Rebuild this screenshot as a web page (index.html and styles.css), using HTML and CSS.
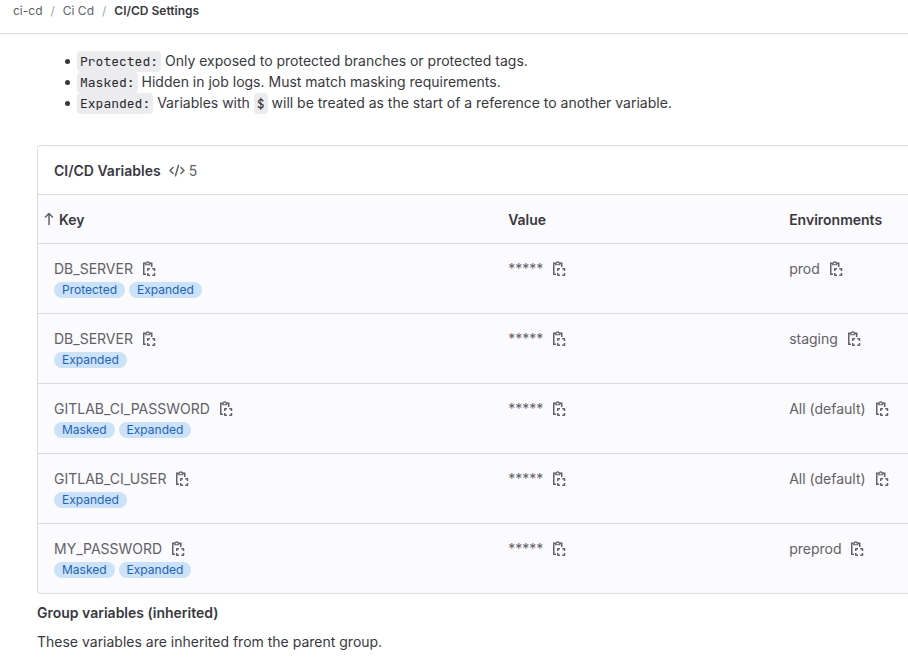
FILE: index.html
```html
<!DOCTYPE html>
<html lang="en">
<head>
<meta charset="utf-8">
<meta name="viewport" content="width=device-width, initial-scale=1">
<title>CI/CD Settings</title>
<link rel="stylesheet" href="styles.css">
</head>
<body>
<svg class="sprite" aria-hidden="true">
  <symbol id="copy" viewBox="0 0 16 16">
    <path d="M4 2.25H2.75v11H5M9 2.25h1.75V6" fill="none" stroke="currentColor" stroke-width="1.5"/>
    <path d="M4.75 3.75V1.8h.8a1.25 1.25 0 0 1 2.4 0h.8v1.95z" fill="none" stroke="currentColor" stroke-width="1.2"/>
    <path d="M6.75 10V7.75H9M11.25 7.75h2.25V10M13.5 12v2.25h-2.25M9 14.25H6.75V12" fill="none" stroke="currentColor" stroke-width="1.5" stroke-linejoin="round"/>
  </symbol>
</svg>
<header class="topbar">
  <nav aria-label="Breadcrumb">
    <ol class="breadcrumb">
      <li><a href="#">ci-cd</a></li>
      <li><a href="#">Ci Cd</a></li>
      <li><a href="#" aria-current="page">CI/CD Settings</a></li>
    </ol>
  </nav>
</header>
<main class="content">
  <ul class="notes">
    <li><code>Protected:</code> Only exposed to protected branches or protected tags.</li>
    <li><code>Masked:</code> Hidden in job logs. Must match masking requirements.</li>
    <li><code>Expanded:</code> Variables with <code>$</code> will be treated as the start of a reference to another variable.</li>
  </ul>
  <section class="card">
    <div class="card-header">
      <h2>CI/CD Variables</h2>
      <span class="count">
        <svg class="code-icon" viewBox="0 0 16 16" aria-hidden="true"><path d="M4 4.5 1 7.5l3 3M12 4.5l3 3-3 3M9.5 2.25l-3 10.5" fill="none" stroke="currentColor" stroke-width="1.5" stroke-linecap="round" stroke-linejoin="round"/></svg>
        5
      </span>
    </div>
    <table>
      <colgroup><col class="col-key"><col class="col-value"><col></colgroup>
      <thead>
        <tr>
          <th class="sorted" scope="col" aria-sort="ascending"><svg class="arrow" viewBox="0 0 10 14" aria-hidden="true"><path d="M5 12.5v-11M1.5 5 5 1.5 8.5 5" fill="none" stroke="currentColor" stroke-width="1.5" stroke-linecap="round" stroke-linejoin="round"/></svg>Key</th>
          <th scope="col">Value</th>
          <th scope="col">Environments</th>
        </tr>
      </thead>
      <tbody>
        <tr>
          <td><div class="cell">DB_SERVER <button type="button" aria-label="Copy key"><svg><use href="#copy"/></svg></button></div><div class="badges"><span>Protected</span><span>Expanded</span></div></td>
          <td><div class="cell">***** <button type="button" aria-label="Copy value"><svg><use href="#copy"/></svg></button></div></td>
          <td><div class="cell">prod <button type="button" aria-label="Copy environment"><svg><use href="#copy"/></svg></button></div></td>
        </tr>
        <tr>
          <td><div class="cell">DB_SERVER <button type="button" aria-label="Copy key"><svg><use href="#copy"/></svg></button></div><div class="badges"><span>Expanded</span></div></td>
          <td><div class="cell">***** <button type="button" aria-label="Copy value"><svg><use href="#copy"/></svg></button></div></td>
          <td><div class="cell">staging <button type="button" aria-label="Copy environment"><svg><use href="#copy"/></svg></button></div></td>
        </tr>
        <tr>
          <td><div class="cell">GITLAB_CI_PASSWORD <button type="button" aria-label="Copy key"><svg><use href="#copy"/></svg></button></div><div class="badges"><span>Masked</span><span>Expanded</span></div></td>
          <td><div class="cell">***** <button type="button" aria-label="Copy value"><svg><use href="#copy"/></svg></button></div></td>
          <td><div class="cell">All (default) <button type="button" aria-label="Copy environment"><svg><use href="#copy"/></svg></button></div></td>
        </tr>
        <tr>
          <td><div class="cell">GITLAB_CI_USER <button type="button" aria-label="Copy key"><svg><use href="#copy"/></svg></button></div><div class="badges"><span>Expanded</span></div></td>
          <td><div class="cell">***** <button type="button" aria-label="Copy value"><svg><use href="#copy"/></svg></button></div></td>
          <td><div class="cell">All (default) <button type="button" aria-label="Copy environment"><svg><use href="#copy"/></svg></button></div></td>
        </tr>
        <tr>
          <td><div class="cell">MY_PASSWORD <button type="button" aria-label="Copy key"><svg><use href="#copy"/></svg></button></div><div class="badges"><span>Masked</span><span>Expanded</span></div></td>
          <td><div class="cell">***** <button type="button" aria-label="Copy value"><svg><use href="#copy"/></svg></button></div></td>
          <td><div class="cell">preprod <button type="button" aria-label="Copy environment"><svg><use href="#copy"/></svg></button></div></td>
        </tr>
      </tbody>
    </table>
  </section>
  <h2 class="group-title">Group variables (inherited)</h2>
  <p>These variables are inherited from the parent group.</p>
</main>
</body>
</html>
```
FILE: styles.css
```css
* { box-sizing: border-box; }
body {
  margin: 0;
  background: #fff;
  color: #3a383f;
  font: 14px/20px Inter, "Liberation Sans", sans-serif;
}
.sprite { display: none; }
h2, p { margin: 0; font-size: 14px; }
h2 { font-weight: 600; }

.topbar {
  padding: 1px 13px 13px;
  border-bottom: 1px solid #dcdcde;
}
.breadcrumb {
  display: flex;
  margin: 0;
  padding: 0;
  list-style: none;
  font-size: 12px;
  line-height: 19px;
}
.breadcrumb li + li::before {
  content: "/";
  margin: 0 8px;
  color: #a4a3a8;
}
.breadcrumb a { color: #626168; text-decoration: none; }
.breadcrumb a[aria-current] { color: #3a383f; font-weight: 600; }

.content { padding: 16px 0 0 37px; }
.notes {
  margin: 0 0 32px;
  padding-left: 28px;
  line-height: 21px;
  list-style: none;
}
.notes li::before {
  content: "";
  display: inline-block;
  width: 5px;
  height: 5px;
  margin-right: 7px;
  border-radius: 50%;
  background: #3a383f;
  vertical-align: 2px;
}
code {
  padding: 2px 3px;
  border-radius: 4px;
  background: #ececef;
  color: #28272d;
  font: 13px/17px "JetBrains Mono", "Liberation Mono", monospace;
}

.card {
  border: 1px solid #dcdcde;
  border-right: 0;
  border-radius: 4px 0 0 4px;
  background: #fbfafd;
  overflow: hidden;
}
.card-header {
  display: flex;
  align-items: center;
  gap: 8px;
  padding: 15px 16px 13px;
  background: #fff;
}
.count { display: flex; align-items: center; gap: 4px; color: #626168; }
.code-icon { width: 16px; height: 16px; }

table { width: 100%; border-collapse: separate; border-spacing: 0; table-layout: fixed; }
.col-key { width: 52.2%; }
.col-value { width: 32.3%; }
th, td {
  padding: 15px 16px 13px;
  border-top: 1px solid #dcdcde;
  text-align: left;
  vertical-align: top;
}
th { font-weight: 600; }
th.sorted { padding-left: 6px; }
.arrow { width: 10px; height: 14px; margin-right: 5px; vertical-align: -1px; color: #626168; }
td { height: 70px; color: #626168; }
.cell { display: flex; align-items: center; gap: 8px; height: 20px; }
button {
  display: flex;
  padding: 0;
  border: 0;
  background: none;
  color: #626168;
  cursor: pointer;
}
button svg { width: 16px; height: 16px; overflow: visible; }
.badges { display: flex; gap: 4px; margin-top: 3px; }
.badges span {
  padding: 0 8px;
  border-radius: 8px;
  background: #cbe2f9;
  color: #1f64b4;
  font-size: 12px;
  line-height: 16px;
}
.group-title { margin: 9px 0; }
```
